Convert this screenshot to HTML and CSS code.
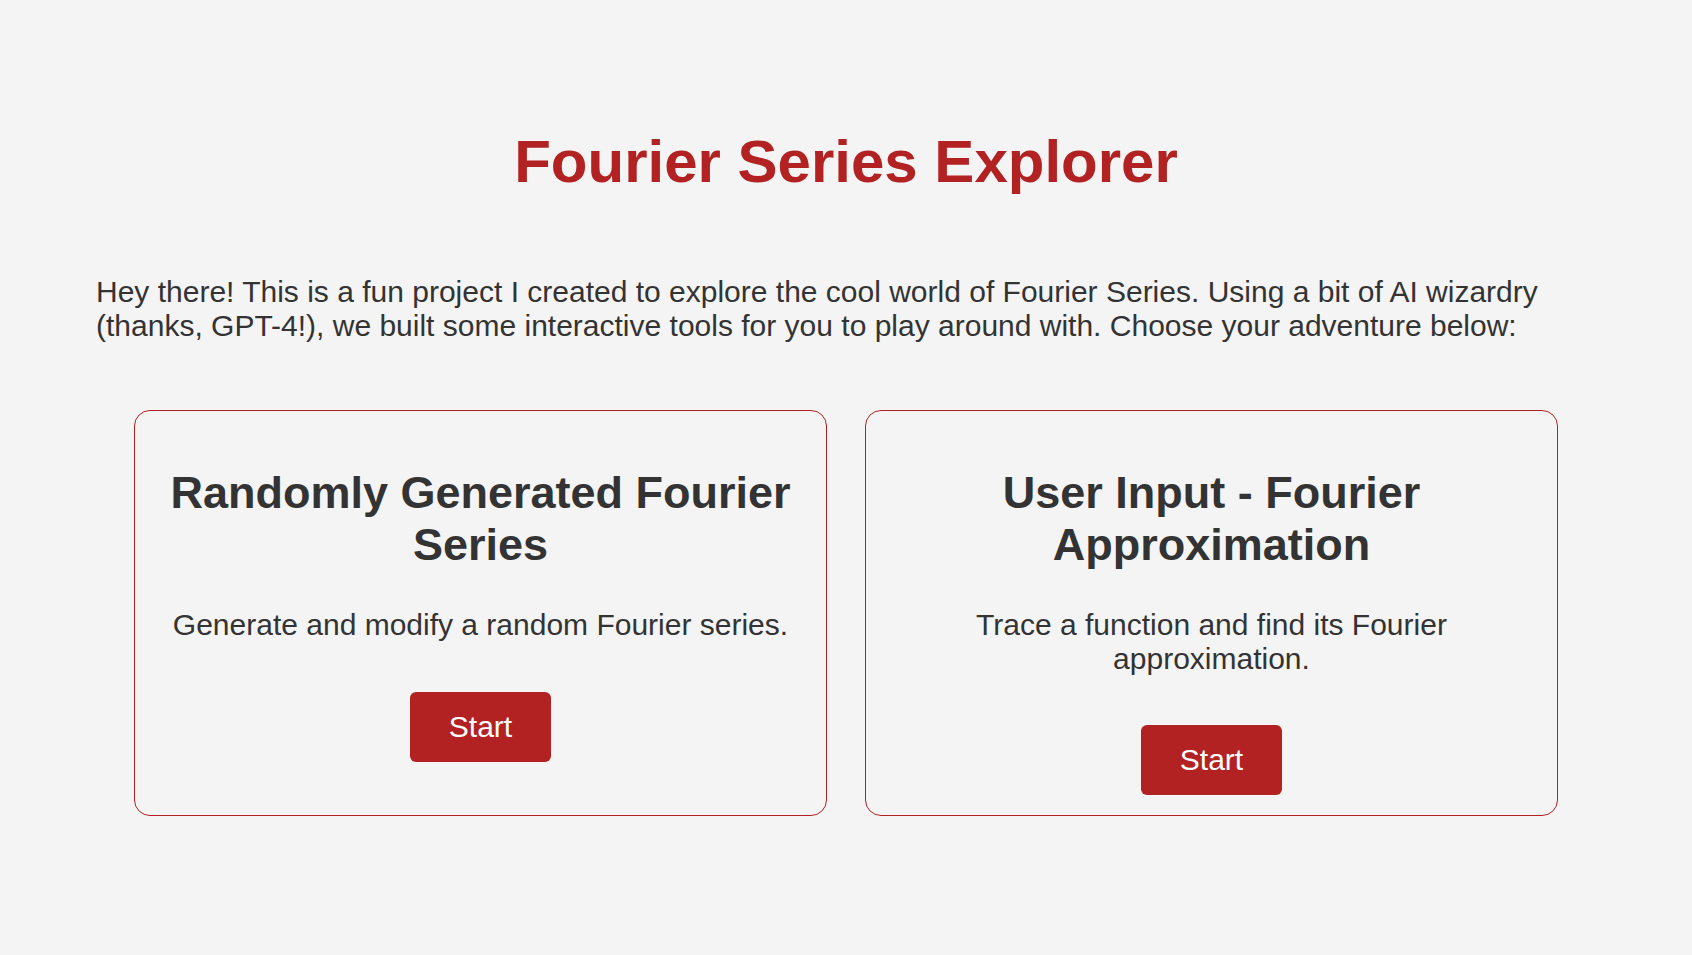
FILE: index.html
```html
<!DOCTYPE html>
<html lang="en">
<head>
<meta charset="utf-8">
<title>Fourier Series Explorer</title>
<link rel="stylesheet" href="styles.css">
</head>
<body>
<main class="page">
  <h1 class="title">Fourier Series Explorer</h1>
  <p class="intro">Hey there! This is a fun project I created to explore the cool world of Fourier Series. Using a bit of AI wizardry (thanks, GPT-4!), we built some interactive tools for you to play around with. Choose your adventure below:</p>
  <section class="cards">
    <div class="card">
      <h2 class="card-title">Randomly Generated Fourier Series</h2>
      <p class="card-desc">Generate and modify a random Fourier series.</p>
      <button class="start-btn" type="button">Start</button>
    </div>
    <div class="card">
      <h2 class="card-title">User Input - Fourier Approximation</h2>
      <p class="card-desc">Trace a function and find its Fourier approximation.</p>
      <button class="start-btn" type="button">Start</button>
    </div>
  </section>
</main>
</body>
</html>
```

FILE: styles.css
```css
html, body {
  margin: 0;
  padding: 0;
}

body {
  background: #f4f4f4;
  color: #333333;
  font-family: "Liberation Sans", Arial, sans-serif;
}

.page {
  max-width: 1500px;
  margin: 0 auto;
  padding-top: 127px;
}

.title {
  margin: 0;
  text-align: center;
  color: #b22222;
  font-size: 60px;
  font-weight: bold;
  line-height: 69px;
}

.intro {
  margin: 79px 0 0;
  font-size: 30px;
  line-height: 33.5px;
}

.cards {
  display: flex;
  gap: 38px;
  padding: 0 38px;
  margin-top: 68px;
}

.card {
  flex: 1;
  border: 1px solid #b22222;
  border-radius: 16px;
  padding: 20px 20px 20px;
  text-align: center;
}

.card-title {
  margin: 36px 0 37px;
  font-size: 45px;
  font-weight: bold;
  line-height: 52px;
}

.card-desc {
  margin: 0;
  font-size: 30px;
  line-height: 33.5px;
}

.start-btn {
  margin-top: 50px;
  height: 70px;
  padding: 0 39px;
  border: none;
  border-radius: 6px;
  background: #b22222;
  color: #ffffff;
  font-family: "Liberation Sans", Arial, sans-serif;
  font-size: 30px;
  cursor: pointer;
}
```
